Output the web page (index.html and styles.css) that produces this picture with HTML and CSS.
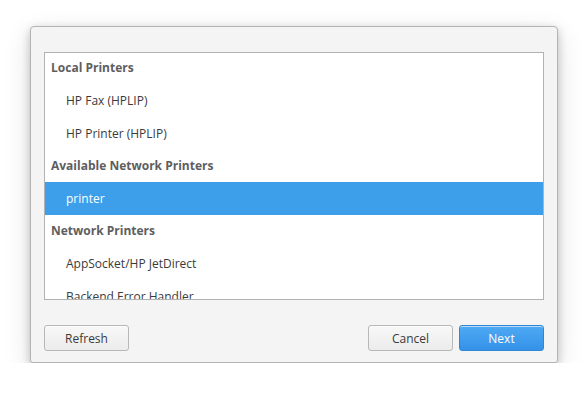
FILE: index.html
```html
<!DOCTYPE html>
<html lang="en">
<head>
    <meta charset="UTF-8">
    <title>Add Printer</title>
    <link rel="stylesheet" href="styles.css">
</head>
<body>
    <div class="dialog">
        <div class="printer-list">
            <div class="group-header first">Local Printers</div>
            <div class="printer-row">HP Fax (HPLIP)</div>
            <div class="printer-row">HP Printer (HPLIP)</div>
            <div class="group-header">Available Network Printers</div>
            <div class="printer-row selected">printer</div>
            <div class="group-header">Network Printers</div>
            <div class="printer-row">AppSocket/HP JetDirect</div>
            <div class="printer-row">Backend Error Handler</div>
        </div>
        <div class="actions">
            <button class="btn">Refresh</button>
            <div class="actions-right">
                <button class="btn">Cancel</button>
                <button class="btn suggested">Next</button>
            </div>
        </div>
    </div>
</body>
</html>
```

FILE: styles.css
```css
body {
    margin: 0;
    padding: 26px 0 0 30px;
    background: #ffffff;
    font-family: "Open Sans", "Noto Sans", sans-serif;
    font-size: 12px;
}

.dialog {
    width: 500px;
    height: 310px;
    padding: 25px 13px 0 13px;
    background: #f4f4f4;
    border: 1px solid #b4b4b4;
    border-radius: 4px 4px 3px 3px;
    box-shadow: 0 3px 10px rgba(0, 0, 0, 0.22), 0 8px 28px rgba(0, 0, 0, 0.12);
}

.printer-list {
    height: 246px;
    background: #ffffff;
    border: 1px solid #b2b2b2;
    overflow: hidden;
}

.group-header {
    height: 32px;
    line-height: 32px;
    padding-left: 6px;
    font-weight: bold;
    color: #5e5e5e;
}

.group-header.first {
    height: 31px;
    line-height: 30px;
}

.printer-row {
    height: 33px;
    line-height: 33px;
    padding-left: 21px;
    color: #3a3a3a;
}

.printer-row.selected {
    background: #3d9fea;
    color: #ffffff;
}

.actions {
    display: flex;
    justify-content: space-between;
    margin-top: 25px;
}

.actions-right {
    display: flex;
    gap: 6px;
}

.btn {
    width: 85px;
    height: 26px;
    padding: 0;
    font-family: inherit;
    font-size: 12px;
    color: #3a3a3a;
    background: linear-gradient(#f8f8f8, #ececec);
    border: 1px solid #b8b8b8;
    border-radius: 3px;
    box-shadow: 0 1px 0 rgba(255, 255, 255, 0.6) inset;
}

.btn.suggested {
    color: #ffffff;
    background: linear-gradient(#4fa9f3, #3492e8);
    border-color: #2f86d6;
}
```
